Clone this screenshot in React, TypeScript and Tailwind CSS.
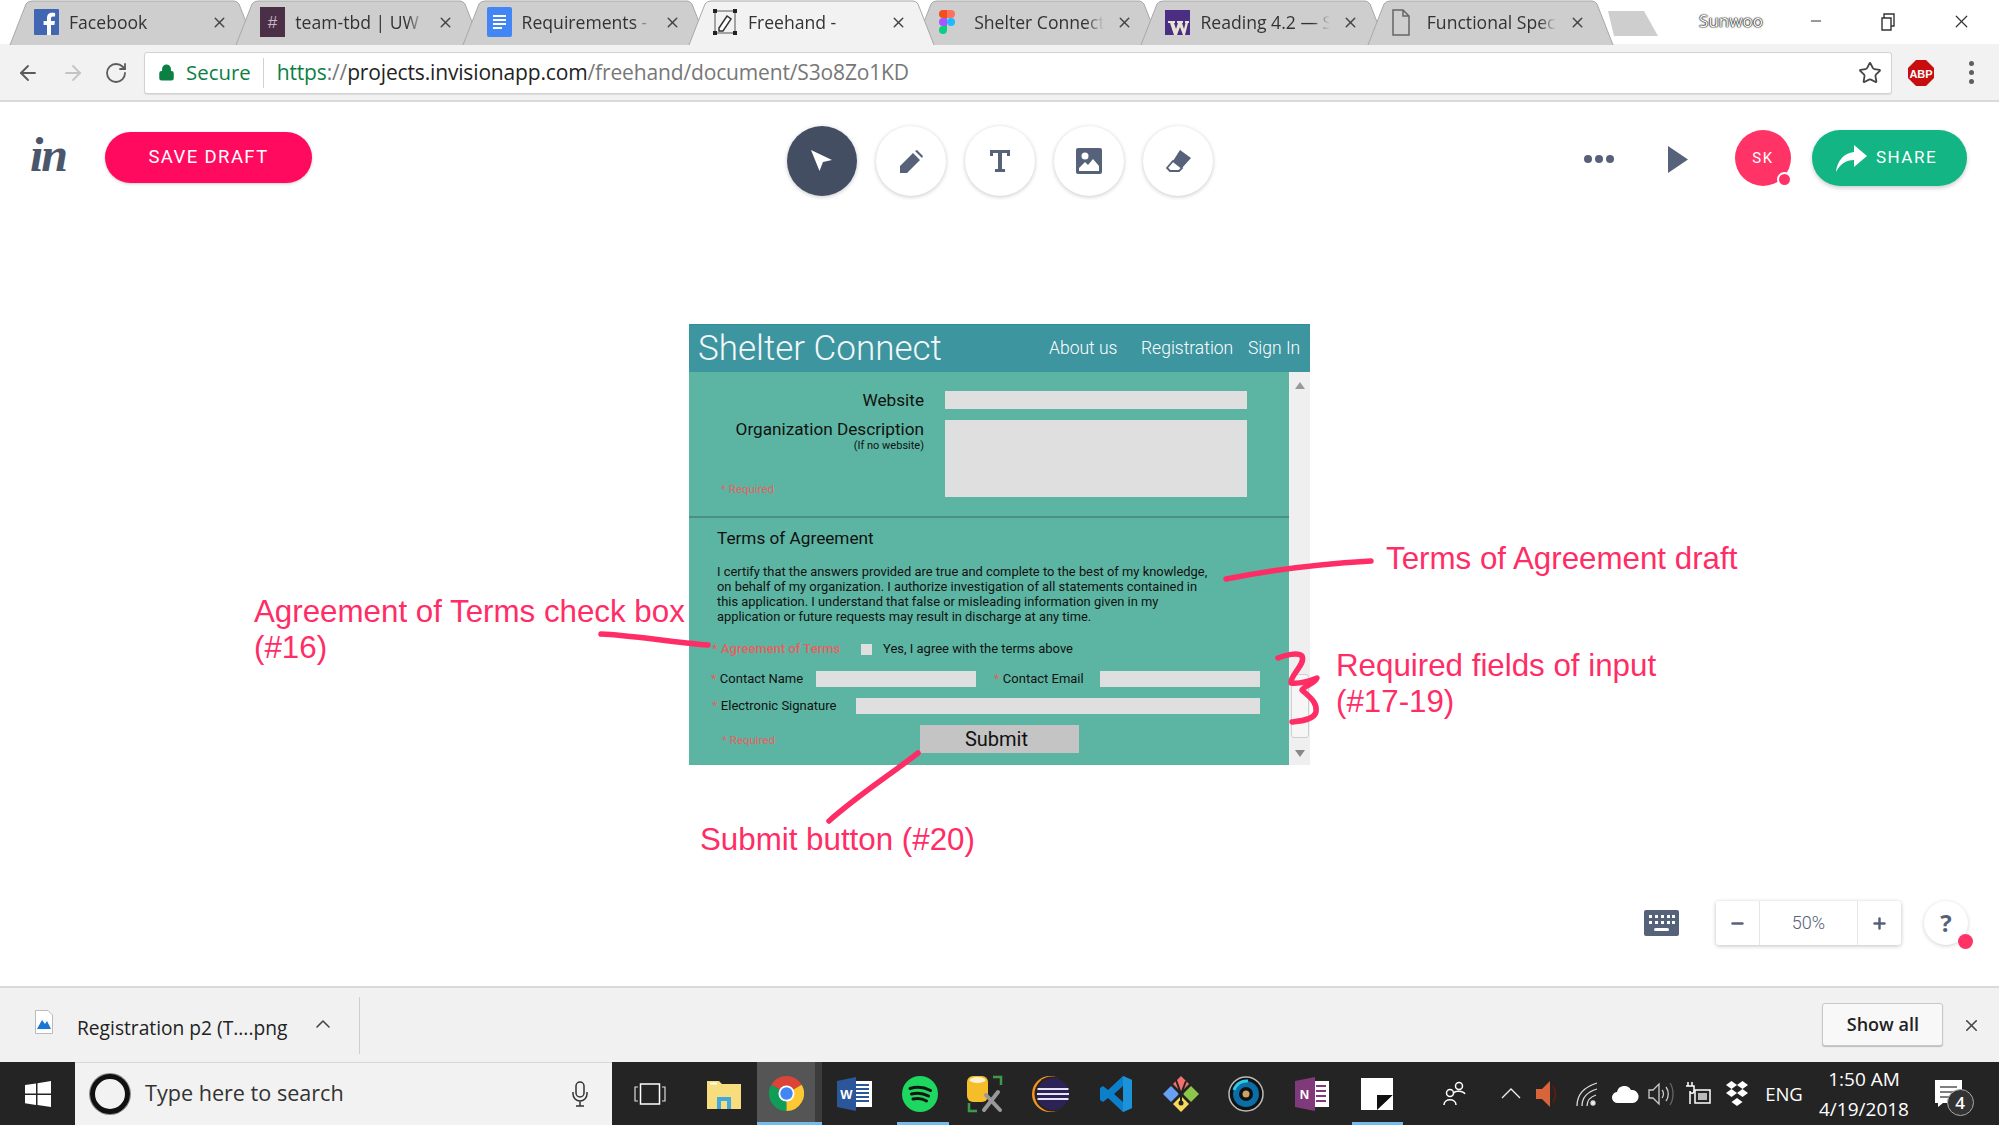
import React from "react";
import { ArrowLeft, ArrowRight, RotateCw, Star, X, Minus, Plus, ChevronUp, Lock } from "lucide-react";

const Facebook = () => (
  <svg width="25" height="26" viewBox="0 0 25 26"><rect width="25" height="26" rx="1" fill="#4267b2" /><path d="M17 26V16h3.4l.5-4H17V9.5c0-1.200.4-2 2-2h2.100V4c-.4 0-1.600-.2-3-.2-3 0-5.100 1.800-5.100 5.200v3H9.600v4H13v10z" fill="#fff" /></svg>
);
const Slack = () => (
  <svg width="25" height="30" viewBox="0 0 25 30"><rect width="25" height="30" fill="#4a2f46" /><text x="12.500" y="21" textAnchor="middle" fontSize="17" fill="#c9b8c6" fontFamily="Liberation Sans">#</text></svg>
);
const Docs = () => (
  <svg width="25" height="30" viewBox="0 0 25 30"><rect width="25" height="30" rx="2" fill="#4285f4" /><path d="M6 9h13M6 13h13M6 17h13M6 21h9" stroke="#fff" strokeWidth="2" /></svg>
);
const Freehand = () => (
  <svg width="24" height="26" viewBox="0 0 24 26"><rect x="2" y="2" width="20" height="22" fill="none" stroke="#555" strokeWidth="1" /><g fill="#222"><rect width="4" height="4" /><rect x="20" width="4" height="4" /><rect y="22" width="4" height="4" /><rect x="20" y="22" width="4" height="4" /></g><path d="M6 19l8-12 4 3-8 12H6z" fill="#fff" stroke="#333" strokeWidth="1.500" /></svg>
);
const Figma = () => (
  <svg width="16" height="24" viewBox="0 0 16 24"><path d="M0 4a4 4 0 0 1 4-4h4v8H4a4 4 0 0 1-4-4z" fill="#f24e1e" /><path d="M8 0h4a4 4 0 0 1 0 8H8z" fill="#ff7262" /><path d="M0 12a4 4 0 0 1 4-4h4v8H4a4 4 0 0 1-4-4z" fill="#a259ff" /><circle cx="12" cy="12" r="4" fill="#1abcfe" /><path d="M0 20a4 4 0 0 1 4-4h4v4a4 4 0 0 1-8 0z" fill="#0acf83" /></svg>
);
const UW = () => (
  <svg width="25" height="25" viewBox="0 0 25 25"><rect width="25" height="25" fill="#4b2e83" /><path d="M3 11h7v2H9l2 6 2-6h-1v-2h6v2h-1l2 6 1.500-6H20v-2h4v2h-1l-3 12h-2l-3-8-3 8H9L5 13H3z" fill="#e8e3d3" /></svg>
);
const FileIcon = () => (
  <svg width="18" height="27" viewBox="0 0 18 27"><path d="M1 1h10l6 6v19H1z M11 1v6h6" fill="none" stroke="#666" strokeWidth="1.500" /></svg>
);

const tabs = [
  { title: "Facebook", icon: <Facebook />, x: 0 },
  { title: "team-tbd | UW Computer", icon: <Slack />, x: 0 },
  { title: "Requirements - Google", icon: <Docs />, x: 0 },
  { title: "Freehand -", icon: <Freehand />, x: 1 },
  { title: "Shelter Connect", icon: <Figma />, x: 0 },
  { title: "Reading 4.2 — Software", icon: <UW />, x: 0 },
  { title: "Functional Spec", icon: <FileIcon />, x: 0 },
];

function Tab({ title, icon, active }: { title: string; icon: React.ReactNode; active: boolean }) {
  return (
    <div className={`relative h-[44px] w-[226.3px] shrink-0 ${active ? "z-10" : ""}`}>
      <svg className="absolute left-0 top-0" width="250" height="45" viewBox="0 0 250 45">
        <path d="M2 45 L18 4 Q20 1 24 1 L226 1 Q229 1 231 4 L247 45" fill={active ? "#f2f2f2" : "#cecece"} stroke="#a8a8a8" strokeWidth="1" />
      </svg>
      <div className="absolute inset-0 flex items-center pl-[26px]">
        <div className="flex w-[35px] shrink-0 items-center">{icon}</div>
        <div className="w-[130px] overflow-hidden whitespace-nowrap text-[17.6px] leading-[26px] text-[#333] [font-family:'Open_Sans',sans-serif] [mask-image:linear-gradient(to_right,black_86%,transparent)]">{title}</div>
        <X className="ml-[12px] shrink-0 text-[#444]" size={17} strokeWidth={2} />
      </div>
    </div>
  );
}

function TabStrip() {
  return (
    <div className="flex h-[44px] items-start bg-white pl-[8px]">
      {tabs.map((t) => (
        <Tab key={t.title} title={t.title} icon={t.icon} active={t.x === 1} />
      ))}
      <svg className="ml-[14px] mt-[11px] shrink-0" width="53" height="26" viewBox="0 0 53 26"><path d="M2 0H38L52 25H8z" fill="#cecece" /></svg>
      <div className="ml-[40px] mt-[8px] text-[17px] text-white [font-family:'Open_Sans',sans-serif] [text-shadow:0_0_1px_#000,0_0_1px_#000,0_0_2px_#222]">Sunwoo</div>
      <Minus className="ml-[45px] mt-[13px] text-[#333]" size={16} strokeWidth={1.500} />
      <svg className="ml-[56px] mt-[13px]" width="16" height="18" viewBox="0 0 16 18"><path d="M4 5V1h10v12h-3M2 5h9v12H2z" fill="none" stroke="#333" strokeWidth="1.400" /></svg>
      <X className="ml-[55px] mt-[11px] text-[#333]" size={21} strokeWidth={1.400} />
    </div>
  );
}

function AddressBar() {
  return (
    <div className="flex h-[58px] items-center border-b-2 border-[#dadada] bg-[#f2f2f2] pt-[1px]">
      <ArrowLeft className="ml-[16px] text-[#5a5a5a]" size={24} strokeWidth={1.800} />
      <ArrowRight className="ml-[21px] text-[#c4c4c4]" size={24} strokeWidth={1.800} />
      <RotateCw className="ml-[19px] text-[#5a5a5a]" size={24} strokeWidth={1.800} />
      <div className="ml-[16px] flex h-[42px] w-[1748px] items-center rounded-[3px] border border-[#d2d2d2] bg-white shadow-[0_1px_1px_#ddd]">
        <Lock className="ml-[13px] text-[#0b8043]" size={17} fill="#0b8043" strokeWidth={2.500} />
        <span className="ml-[11px] text-[20.4px] text-[#0b8043] [font-family:'Open_Sans',sans-serif]">Secure</span>
        <div className="ml-[12px] h-[30px] w-px bg-[#d0d0d0]" />
        <div className="ml-[13px] whitespace-nowrap text-[21px] tracking-[-0.15px] text-[#777] [font-family:'Open_Sans',sans-serif]">
          <span className="text-[#0b8043]">https</span>
          <span>://</span>
          <span className="text-[#222]">projects.invisionapp.com</span>
          /freehand/document/S3o8Zo1KD
        </div>
        <Star className="ml-auto mr-[9px] text-[#444]" size={24} strokeWidth={1.800} />
      </div>
      <svg className="ml-[16px]" width="26" height="26" viewBox="0 0 26 26"><path d="M8 0h10l8 8v10l-8 8H8l-8-8V8z" fill="#c70d0d" /><text x="13" y="17.500" textAnchor="middle" fontSize="11" fontWeight="700" fill="#fff" fontFamily="Liberation Sans">ABP</text></svg>
      <div className="ml-[35px] flex flex-col gap-[4px]">
        <div className="size-[5px] rounded-full bg-[#5f5f5f]" />
        <div className="size-[5px] rounded-full bg-[#5f5f5f]" />
        <div className="size-[5px] rounded-full bg-[#5f5f5f]" />
      </div>
    </div>
  );
}

const tools = [
  <svg key="a" width="22" height="22" viewBox="0 0 22 22"><path d="M0 0 L21 10 L12 12 L8.500 21z" fill="#fff" /></svg>,
  <svg key="b" width="23" height="23" viewBox="0 0 23 23"><path d="M0 23V16L13 3l7 7L7 23z M15 1l2-1 6 6-1 2z" fill="#566279" /></svg>,
  <svg key="c" width="20" height="22" viewBox="0 0 20 22"><path d="M0 0H20V6H17V3H12V19H15V22H5V19H8V3H3V6H0z" fill="#566279" /></svg>,
  <svg key="d" width="26" height="26" viewBox="0 0 26 26"><rect width="26" height="26" rx="2" fill="#566279" /><circle cx="9" cy="8" r="3.500" fill="#fff" /><path d="M3 23V20L9 14L12 17L17 11L23 18V23z" fill="#fff" /></svg>,
  <svg key="e" width="25" height="22" viewBox="0 0 25 22"><path d="M14 0L25 8 16 18 7 11z" fill="#566279" /><path d="M7 11L16 18 13 21H4L1 18z" fill="#fff" stroke="#566279" strokeWidth="1.800" /></svg>,
];

function AppHeader() {
  return (
    <div className="flex h-[90px] items-start pl-[30px]">
      <div className="mt-[31px] w-[38px] text-[48px] font-bold italic leading-[44px] tracking-[-2px] text-[#4a566c] [font-family:'Liberation_Serif',serif]">in</div>
      <button className="ml-[37px] mt-[30px] h-[51px] w-[207px] rounded-full bg-[#ff0a5e] text-[18.5px] font-normal tracking-[1.4px] text-white shadow-[0_1px_3px_#ccc] [font-family:Roboto,sans-serif]">SAVE DRAFT</button>
      <div className="ml-[475px] mt-[24px] flex gap-[19px]">
        {tools.map((t, i) => (
          <div key={i} className={`flex size-[70px] items-center justify-center rounded-full shadow-[0_1px_4px_rgba(0,0,0,0.22)] ${i === 0 ? "bg-[#434e63]" : "bg-white"}`}>{t}</div>
        ))}
      </div>
      <div className="ml-[371px] mt-[53px] flex w-[30px] justify-between">
        <div className="size-[8px] rounded-full bg-[#566279]" />
        <div className="size-[8px] rounded-full bg-[#566279]" />
        <div className="size-[8px] rounded-full bg-[#566279]" />
      </div>
      <svg className="ml-[54px] mt-[44px]" width="20" height="27" viewBox="0 0 20 27"><path d="M0 0L20 13.500 0 27z" fill="#566279" /></svg>
      <div className="relative ml-[47px] mt-[28px] flex size-[56px] items-center justify-center rounded-full bg-[#ff3366] text-[15px] tracking-[1.500px] text-white [font-family:Roboto,sans-serif]">
        SK
        <div className="absolute bottom-[-1px] right-[-1px] size-[15px] rounded-full border-2 border-white bg-[#ff3366]" />
      </div>
      <button className="ml-[21px] mt-[28px] flex h-[56px] w-[155px] items-center rounded-full bg-[#12b583] pl-[24px] text-[17px] tracking-[1.500px] text-white shadow-[0_2px_4px_#ccc] [font-family:Roboto,sans-serif]">
        <svg className="mr-[9px]" width="31" height="27" viewBox="0 0 31 27"><path d="M18 0L31 11 18 22V15C10 15 4 19 0 27 1 16 8 8 18 7z" fill="#fff" /></svg>
        SHARE
      </button>
    </div>
  );
}

function Field({ className }: { className: string }) {
  return <div className={`bg-[#dfdfdf] ${className}`} />;
}

function Req({ children }: { children: React.ReactNode }) {
  return <span className="text-[#e8605f]">{children}</span>;
}

function Mock() {
  return (
    <div className="ml-[689px] mt-[132px] h-[441px] w-[621px] text-[#111] [font-family:Roboto,sans-serif]">
      <div className="flex h-[48px] items-center whitespace-nowrap border-t border-[#2a919c] bg-[#3d95a0] pl-[9px] text-white">
        <div className="w-[351px] shrink-0 text-[35px] font-light leading-[40px] text-[#f4f8f8]">Shelter Connect</div>
        <div className="w-[92px] shrink-0 text-[17.5px] font-light">About us</div>
        <div className="w-[107px] shrink-0 text-[17.5px] font-light">Registration</div>
        <div className="shrink-0 text-[17.5px] font-light">Sign In</div>
      </div>
      <div className="flex h-[393px]">
        <div className="w-[600px] bg-[#5cb5a2]">
          <div className="h-[146px] border-b-2 border-[#4a8f85] pt-[19px]">
            <div className="flex h-[18px] items-center">
              <div className="mb-[1px] w-[235px] text-right text-[17.2px] leading-[22px]">Website</div>
              <Field className="ml-[21px] h-[18px] w-[302px]" />
            </div>
            <div className="mt-[11px] flex h-[77px]">
              <div className="flex w-[235px] flex-col">
                <div className="mt-[-1px] text-right text-[17.2px] leading-[20px]">Organization Description</div>
                <div className="text-right text-[11px] leading-[14px]">(If no website)</div>
                <div className="mt-auto pl-[32px] text-[11.5px] leading-[15px]"><Req>* Required</Req></div>
              </div>
              <Field className="ml-[21px] h-[77px] w-[302px]" />
            </div>
          </div>
          <div className="pl-[28px] pt-[10px] text-[17.2px] leading-[20px]">Terms of Agreement</div>
          <p className="ml-[28px] mt-[15.500px] whitespace-nowrap text-[12.9px] leading-[15px]">
            I certify that the answers provided are true and complete to the best of my knowledge,<br />
            on behalf of my organization. I authorize investigation of all statements contained in<br />
            this application. I understand that false or misleading information given in my<br />
            application or future requests may result in discharge at any time.
          </p>
          <div className="mt-[18.500px] flex h-[14px] items-center pl-[23px] text-[13px]">
            <div className="w-[149px] font-medium"><Req>* Agreement of Terms</Req></div>
            <div className="size-[11px] bg-[#dfdfdf]" />
            <div className="ml-[11px]">Yes, I agree with the terms above</div>
          </div>
          <div className="mt-[15px] flex h-[16px] items-center pl-[22px] text-[13px]">
            <div className="w-[105px]"><Req>*</Req> Contact Name</div>
            <Field className="h-[16px] w-[160px]" />
            <div className="ml-[18px] w-[106px]"><Req>*</Req> Contact Email</div>
            <Field className="h-[16px] w-[160px]" />
          </div>
          <div className="mt-[11px] flex h-[16px] items-center pl-[23px] text-[13px]">
            <div className="w-[144px]"><Req>*</Req> Electronic Signature</div>
            <Field className="h-[16px] w-[404px]" />
          </div>
          <div className="mt-[11px] flex h-[28px] items-center pl-[33px]">
            <div className="mt-[4px] w-[198px] text-[11.5px]"><Req>* Required</Req></div>
            <div className="flex h-[28px] w-[159px] items-center justify-center bg-[#c4c4c4] pr-[6px] text-[20px] text-[#111]">Submit</div>
          </div>
        </div>
        <div className="flex w-[21px] flex-col items-center bg-[#efefef] pt-[10px]">
          <svg width="10" height="7" viewBox="0 0 10 7"><path d="M5 0L10 7H0z" fill="#999" /></svg>
          <div className="ml-[1px] mt-[285px] h-[64px] w-[18px] rounded-[3px] border border-[#cfcfcf] bg-[#f6f6f6]" />
          <svg className="mt-[12px]" width="10" height="7" viewBox="0 0 10 7"><path d="M5 7L10 0H0z" fill="#888" /></svg>
        </div>
      </div>
    </div>
  );
}

function ZoomBar() {
  return (
    <div className="mt-auto flex h-[44px] items-center pl-[1644px]">
      <svg width="35" height="26" viewBox="0 0 35 26"><rect width="35" height="26" rx="2" fill="#566279" /><g fill="#fff"><rect x="5" y="5" width="3" height="3" /><rect x="11" y="5" width="3" height="3" /><rect x="17" y="5" width="3" height="3" /><rect x="23" y="5" width="3" height="3" /><rect x="28" y="5" width="3" height="3" /><rect x="5" y="11" width="3" height="3" /><rect x="11" y="11" width="3" height="3" /><rect x="17" y="11" width="3" height="3" /><rect x="23" y="11" width="3" height="3" /><rect x="28" y="11" width="3" height="3" /><rect x="10" y="18" width="15" height="3" rx="1.500" /></g></svg>
      <div className="ml-[37px] flex h-[44px] w-[185px] items-center rounded-[3px] bg-white text-[#566279] shadow-[0_1px_4px_rgba(0,0,0,0.25)] [font-family:Roboto,sans-serif]">
        <div className="flex w-[43px] justify-center"><Minus size={17} strokeWidth={3.500} /></div>
        <div className="h-[44px] w-[99px] border-x border-[#e4e6ea] text-center text-[18px] font-light leading-[44px]">50%</div>
        <div className="flex w-[43px] justify-center"><Plus size={17} strokeWidth={3.500} /></div>
      </div>
      <div className="relative ml-[23px] flex size-[44px] items-center justify-center rounded-full bg-white text-[24px] font-bold text-[#566279] shadow-[0_1px_4px_rgba(0,0,0,0.18)] [font-family:'Open_Sans',sans-serif]">
        ?
        <div className="absolute bottom-[-4px] right-[-5px] size-[15px] rounded-full bg-[#ff3366]" />
      </div>
    </div>
  );
}

function DownloadBar() {
  return (
    <div className="flex h-[76px] items-center border-t-2 border-[#dadada] bg-[#f1f1f1] [font-family:'Open_Sans',sans-serif]">
      <svg className="mb-[6px] ml-[35px]" width="18" height="24" viewBox="0 0 18 24"><path d="M.5.500H13L17.500 5V23.500H.5z" fill="#fff" stroke="#bbb" /><path d="M2 19L7 10 10 14 12 11 16 19z" fill="#1976d2" /></svg>
      <div className="ml-[24px] mt-[7px] text-[19.2px] text-[#222]">Registration p2 (T....png</div>
      <ChevronUp className="mb-[2px] ml-[24px] text-[#444]" size={24} strokeWidth={1.600} />
      <div className="ml-[24px] h-[57px] w-px bg-[#cfcfcf]" />
      <button className="ml-[1462px] mb-[2px] h-[43px] w-[121px] rounded-[3px] border border-[#c8c8c8] bg-[#f8f8f8] text-[18px] font-semibold text-[#222] shadow-[0_1px_1px_#bbb]">Show all</button>
      <X className="ml-[19px] text-[#444]" size={19} strokeWidth={2} />
    </div>
  );
}

const ti = "flex h-[63px] w-[65.3px] shrink-0 items-center justify-center";

function Taskbar() {
  return (
    <div className="flex h-[63px] bg-[#242424] [font-family:'Open_Sans',sans-serif]">
      <div className="flex w-[75px] shrink-0 items-center justify-center">
        <svg width="26" height="26" viewBox="0 0 26 26"><path d="M0 4L11 2.400V12.500H0zM12.500 2.200L26 0V12.500H12.500zM0 14H11V24L0 22.300zM12.500 14H26V26L12.500 24z" fill="#fff" /></svg>
      </div>
      <div className="flex w-[537px] shrink-0 items-center border-t border-[#d8d8d8] bg-[#f2f2f2]">
        <div className="ml-[15px] size-[40px] rounded-full border-[5px] border-[#111] shadow-[0_0_0_1px_#888]" />
        <div className="ml-[15px] mb-[2px] text-[21.6px] text-[#333]">Type here to search</div>
        <svg className="ml-auto mr-[23px]" width="18" height="26" viewBox="0 0 18 26"><rect x="5" y="1" width="8" height="15" rx="4" fill="none" stroke="#333" strokeWidth="1.500" /><path d="M2 11v2a7 7 0 0 0 14 0v-2M9 20v5M5 25h8" fill="none" stroke="#333" strokeWidth="1.500" /></svg>
      </div>
      <div className="flex h-[63px] w-[79.350px] shrink-0 items-center justify-center pr-[3px]">
        <svg width="32" height="22" viewBox="0 0 32 22"><rect x="6.500" y="1" width="19" height="20" fill="none" stroke="#fff" strokeWidth="1.500" /><path d="M4 4H1V18H4M28 4H31V18H28" fill="none" stroke="#ddd" strokeWidth="1.200" /></svg>
      </div>
      <div className={ti}>
        <svg width="34" height="30" viewBox="0 0 34 30"><path d="M0 2H12L15 5H34V30H0z" fill="#f8dd7f" /><rect x="3" y="3.500" width="7" height="2" fill="#fff" /><path d="M10 30V18H24V30H20V22H14V30z" fill="#3fa9e0" /></svg>
      </div>
      <div className={`${ti} relative bg-[linear-gradient(to_right,#555_89%,#3c3c3c_89%)] pr-[5px]`}>
        <svg width="35" height="35" viewBox="0 0 48 48"><path d="M24 24L3.200 12A24 24 0 0 1 44.800 12z" fill="#db4437" /><path d="M24 24L3.200 12A24 24 0 0 0 24 48z" fill="#0f9d58" /><path d="M24 24L44.800 12A24 24 0 0 1 24 48z" fill="#fcc934" /><circle cx="24" cy="24" r="11" fill="#fff" /><circle cx="24" cy="24" r="8.500" fill="#4285f4" /></svg>
        <div className="absolute bottom-0 left-0 right-0 h-[3px] bg-[#76b9ed]" />
      </div>
      <div className={ti}>
        <svg width="35" height="34" viewBox="0 0 35 34"><rect x="14" y="4" width="21" height="26" fill="#fff" /><path d="M17 8h15M17 12h15M17 16h15M17 20h15M17 24h15" stroke="#2b579a" strokeWidth="1.800" /><path d="M0 4L19 0V34L0 30z" fill="#2b579a" /><text x="9.500" y="22" textAnchor="middle" fontSize="13" fontWeight="700" fill="#fff" fontFamily="Liberation Sans">W</text></svg>
      </div>
      <div className={`${ti} relative`}>
        <svg width="36" height="36" viewBox="0 0 36 36"><circle cx="18" cy="18" r="18" fill="#1ed760" /><path d="M8 12.500C15 10.500 22 11 28.500 14.500M9.500 18C15 16.500 21 17 26.500 20M11 23C15.500 22 20.500 22.500 24.500 25" fill="none" stroke="#191414" strokeWidth="3" strokeLinecap="round" /></svg>
        <div className="absolute bottom-0 left-[10px] h-[3px] w-[52px] bg-[#76b9ed]" />
      </div>
      <div className={ti}>
        <svg width="38" height="38" viewBox="0 0 38 38"><path d="M27 2h8v8M3 28v8h8" fill="none" stroke="#3d9a4b" strokeWidth="2.500" /><rect x="1" y="1" width="21" height="26" rx="6" fill="#f5bd29" /><ellipse cx="11.500" cy="5" rx="8" ry="3" fill="#fdf0cf" /><path d="M18 35L32 17M34 35L20 20" stroke="#999" strokeWidth="4" strokeLinecap="round" /></svg>
      </div>
      <div className={ti}>
        <svg width="37" height="36" viewBox="0 0 37 36"><circle cx="18" cy="18" r="18" fill="#f7941e" /><circle cx="20" cy="18" r="17.500" fill="#242424" /><circle cx="21" cy="18" r="16" fill="#2c2255" /><path d="M5.500 13H36.500M5 18H37M5.500 23H36.500" stroke="#e8e4f5" strokeWidth="2.200" /></svg>
      </div>
      <div className={ti}>
        <svg width="32" height="36" viewBox="0 0 32 36"><path d="M23 0L32 4V32L23 36L8 22L3 26L0 24V12L3 10L8 14zM23 10L14 18L23 26z" fill="#0b7fc9" /><path d="M23 0L32 4V32L23 36z" fill="#1c93d8" /></svg>
      </div>
      <div className={ti}>
        <svg width="38" height="38" viewBox="0 0 38 38"><path d="M19 1L27 9L19 17L11 9z" fill="#f27070" /><path d="M9 11L17 19L9 27L1 19z" fill="#68a0f5" /><path d="M29 11L37 19L29 27L21 19z" fill="#8cc64a" /><path d="M19 21L27 29L19 37L11 29z" fill="#f7d85a" /><path d="M14 5L19 19V28M24 6L19 19" stroke="#222" strokeWidth="2" fill="none" /><circle cx="19" cy="19" r="2.500" fill="#222" /><circle cx="19" cy="28" r="2.500" fill="#222" /></svg>
      </div>
      <div className={ti}>
        <svg width="36" height="36" viewBox="0 0 36 36"><circle cx="18" cy="18" r="17" fill="#111" stroke="#bbb" strokeWidth="1.500" /><circle cx="18" cy="18" r="13" fill="#0a6ea8" /><circle cx="18" cy="18" r="7" fill="#111" /><circle cx="18" cy="18" r="3.500" fill="#c9a36a" /><path d="M6 14A13 13 0 0 1 20 5" stroke="#2fc7e6" strokeWidth="3" fill="none" /></svg>
      </div>
      <div className={ti}>
        <svg width="34" height="34" viewBox="0 0 34 34"><rect x="16" y="4" width="18" height="26" fill="#fff" /><path d="M21 9h10M21 14h10M21 19h10M21 24h10" stroke="#80397b" strokeWidth="2" /><path d="M0 4L20 0V34L0 30z" fill="#80397b" /><text x="9.500" y="22" textAnchor="middle" fontSize="13" fontWeight="700" fill="#fff" fontFamily="Liberation Sans">N</text></svg>
      </div>
      <div className={`${ti} relative`}>
        <svg width="32" height="32" viewBox="0 0 32 32"><path d="M0 0H32V32H0z" fill="#fff" /><path d="M16 32V17H32z" fill="#111" /><path d="M17 32L32 17V32z" fill="#fff" /></svg>
        <div className="absolute bottom-0 left-[8px] h-[3px] w-[51px] bg-[#76b9ed]" />
      </div>
      <div className="ml-[15.400px] flex w-[60px] shrink-0 items-center justify-center">
        <svg width="24" height="25" viewBox="0 0 24 25" fill="none" stroke="#fff" strokeWidth="1.500"><circle cx="16" cy="5" r="3.500" /><path d="M11 12C12 9.500 20 9.500 22 13" /><circle cx="7" cy="12" r="3.500" /><path d="M1 24C1 17 13 17 13 24" /></svg>
      </div>
      <div className="ml-[8px] flex w-[36px] shrink-0 items-center justify-center">
        <svg width="20" height="11" viewBox="0 0 20 11"><path d="M1 10L10 1 19 10" fill="none" stroke="#eee" strokeWidth="1.300" /></svg>
      </div>
      <div className="flex w-[38px] shrink-0 items-center justify-center">
        <svg width="24" height="28" viewBox="0 0 24 28"><path d="M0 9H6L14 1V27L6 19H0z" fill="#d8653a" /><path d="M17 6C20 11 20 17 17 22" stroke="#5a1d10" strokeWidth="2" fill="none" /></svg>
      </div>
      <div className="flex w-[40px] shrink-0 items-center justify-center">
        <svg width="22" height="26" viewBox="0 0 22 26" fill="none" stroke="#ddd" strokeWidth="1.300"><path d="M1 25C1 14 8 6 21 2M6 25C6 17 11 11 21 8M11 25C11 20 14 16 20 14" /><circle cx="17" cy="22" r="2" fill="#eee" /></svg>
      </div>
      <div className="flex w-[36px] shrink-0 items-center justify-center">
        <svg width="27" height="20" viewBox="0 0 27 20"><path d="M6 19A5.500 5.500 0 0 1 5 8 7.500 7.500 0 0 1 19 6 6.500 6.500 0 0 1 21 19z" fill="#fff" /></svg>
      </div>
      <div className="flex w-[36px] shrink-0 items-center justify-center">
        <svg width="26" height="28" viewBox="0 0 26 28" fill="none" stroke="#ccc" strokeWidth="1.300"><path d="M1 10H5L11 4V24L5 18H1z" /><path d="M14 10C16 12 16 16 14 18M18 7C21 11 21 17 18 21" /><path d="M22 3C26 9 26 19 22 25" stroke="#666" /></svg>
      </div>
      <div className="flex w-[38px] shrink-0 items-center justify-center">
        <svg width="26" height="24" viewBox="0 0 26 24" fill="none" stroke="#fff" strokeWidth="1.500"><path d="M3 0V4M7 0V4M1 4H9V9C9 12 5 12 5 9V22" /><rect x="10" y="8" width="15" height="13" /><rect x="13" y="11" width="9" height="7" fill="#bbb" stroke="none" /></svg>
      </div>
      <div className="flex w-[40px] shrink-0 items-center justify-center">
        <svg width="22" height="26" viewBox="0 0 22 26" fill="#fff"><path d="M5.500 0L11 4 5.500 8 0 4zM16.500 0L22 4 16.500 8 11 4zM5.500 8L11 12 5.500 16 0 12zM16.500 8L22 12 16.500 16 11 12zM11 17L16.500 21 11 25 5.500 21z" /></svg>
      </div>
      <div className="flex w-[54px] shrink-0 items-center justify-center text-[18.5px] text-white">ENG</div>
      <div className="flex w-[106px] shrink-0 flex-col items-center text-[19px] leading-[30px] text-white">
        <div className="mt-[2px]">1:50 AM</div>
        <div>4/19/2018</div>
      </div>
      <div className="flex w-[62px] shrink-0 items-center justify-center">
        <div className="relative">
          <svg width="27" height="27" viewBox="0 0 27 27"><path d="M0 0H27V23H8L3 27V23H0z" fill="#fff" /><path d="M5 7H22M5 12H22M5 17H16" stroke="#555" strokeWidth="1.500" /></svg>
          <div className="absolute left-[12px] top-[9px] flex size-[27px] items-center justify-center rounded-full border border-[#aaa] bg-[#333] text-[17px] font-semibold text-white">4</div>
        </div>
      </div>
    </div>
  );
}

const note = "absolute whitespace-nowrap text-[31.3px] leading-[36px] text-[#ff2d66] [font-family:'Liberation_Sans',sans-serif]";

export default function App() {
  return (
    <div className="relative flex h-[1125px] w-[1999px] flex-col overflow-hidden bg-white">
      <TabStrip />
      <AddressBar />
      <main className="flex h-[884px] flex-col bg-white pb-[41px]">
        <AppHeader />
        <Mock />
        <ZoomBar />
      </main>
      <DownloadBar />
      <Taskbar />

      <div className={`${note} left-[254px] top-[594px]`}>Agreement of Terms check box<br />(#16)</div>
      <div className={`${note} left-[1386px] top-[541px]`}>Terms of Agreement draft</div>
      <div className={`${note} left-[1336px] top-[648px]`}>Required fields of input<br />(#17-19)</div>
      <div className={`${note} left-[700px] top-[822px]`}>Submit button (#20)</div>

      <svg className="pointer-events-none absolute left-0 top-0" width="1999" height="1125" viewBox="0 0 1999 1125" fill="none" stroke="#ff2d66" strokeWidth="5.500" strokeLinecap="round" strokeLinejoin="round">
        <path d="M601 634C630 635 670 642 708 645" />
        <path d="M1226 579C1270 570 1320 564 1371 561" />
        <path d="M1278 658C1285 655 1298 652 1302 656C1306 664 1290 675 1291 683C1300 684 1312 680 1317 678C1315 684 1304 686 1302 690C1308 696 1318 702 1316 712C1314 720 1300 721 1292 722" />
        <path d="M918 753C890 775 858 795 829 821" />
      </svg>
    </div>
  );
}
